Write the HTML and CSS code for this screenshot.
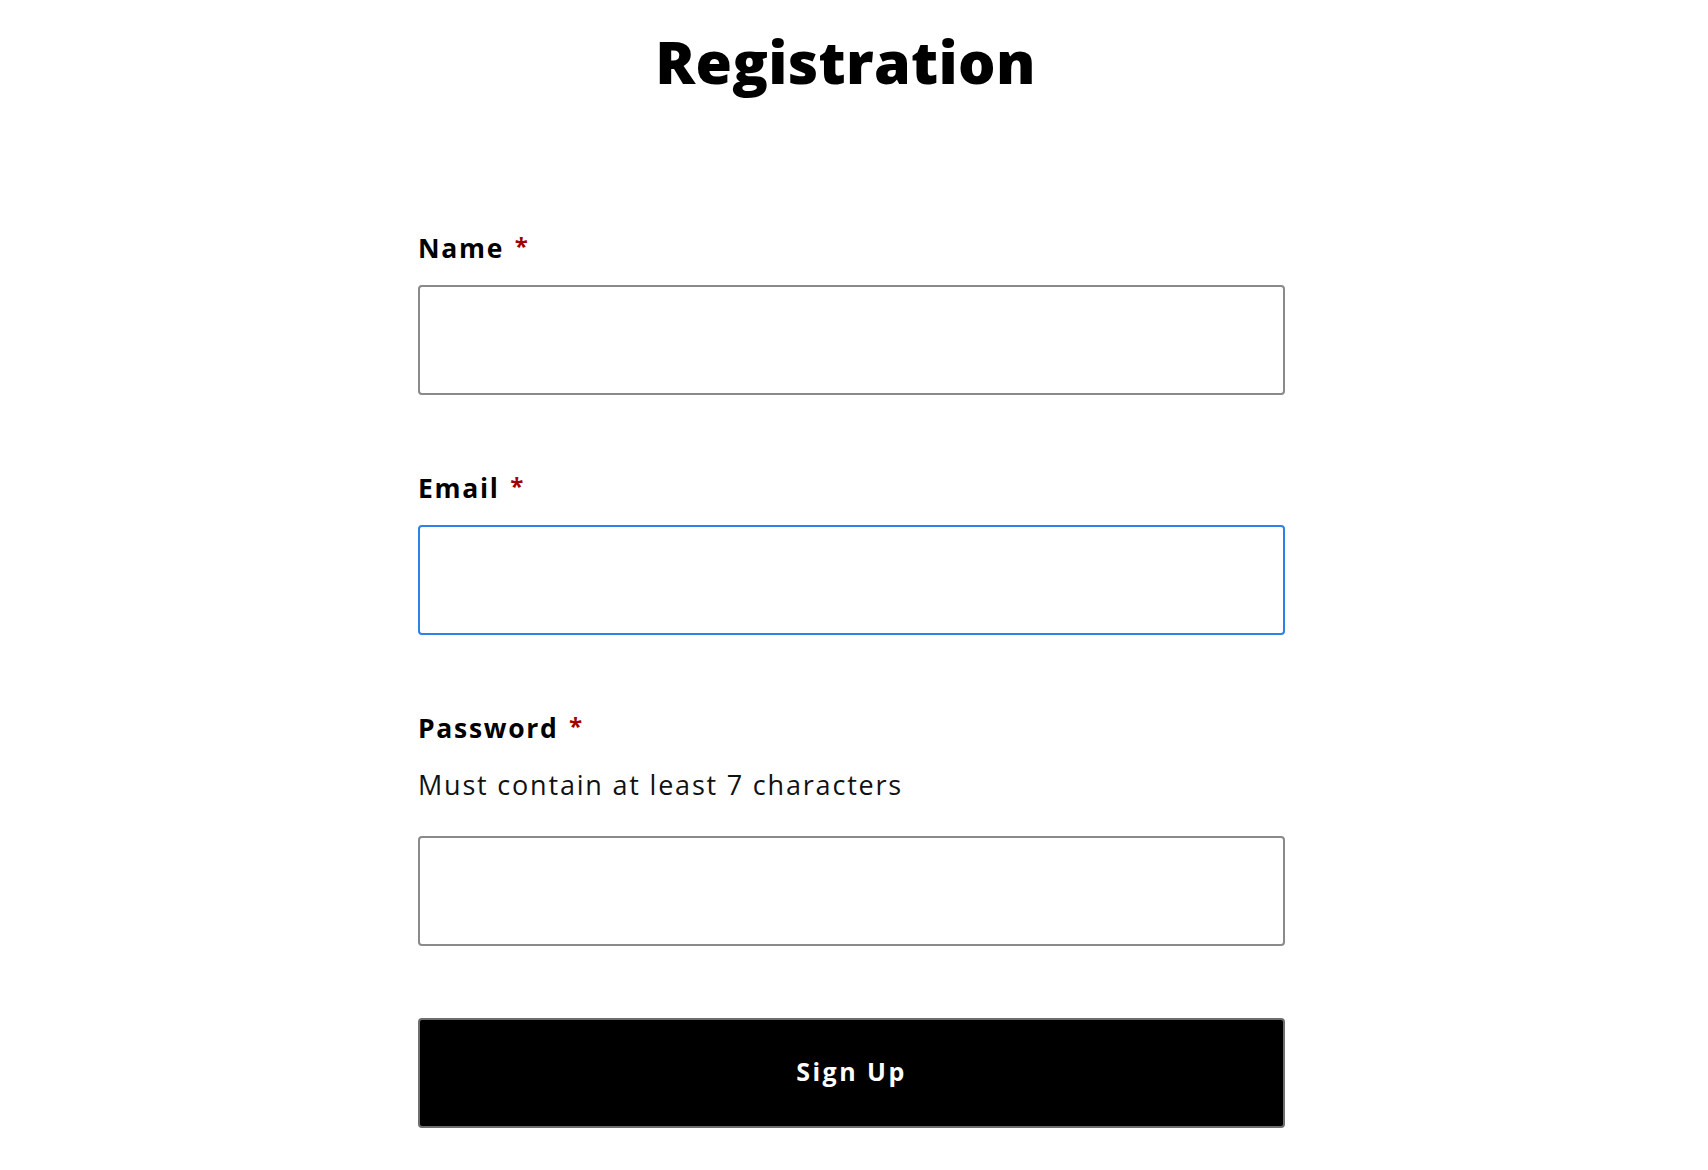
FILE: index.html
```html
<!DOCTYPE html>
<html lang="en">
<head>
<meta charset="utf-8">
<title>Registration</title>
<link rel="stylesheet" href="styles.css">
</head>
<body>
<main class="page">
  <h1 class="title">Registration</h1>
  <form class="form">
    <div class="field">
      <label class="label" for="name">Name <span class="req">*</span></label>
      <input class="input" id="name" type="text">
    </div>
    <div class="field">
      <label class="label" for="email">Email <span class="req">*</span></label>
      <input class="input input-focus" id="email" type="email">
    </div>
    <div class="field">
      <label class="label" for="password">Password <span class="req">*</span></label>
      <p class="hint">Must contain at least 7 characters</p>
      <input class="input" id="password" type="password">
    </div>
    <button class="submit" type="button">Sign Up</button>
  </form>
</main>
</body>
</html>
```

FILE: styles.css
```css
html, body {
  margin: 0;
  padding: 0;
  background: #ffffff;
}

body {
  font-family: "Open Sans", "DejaVu Sans", sans-serif;
  color: #000000;
}

.page {
  width: 867px;
  margin-left: 418px;
  padding-top: 21px;
}

.title {
  margin: 0;
  padding-right: 12px;
  font-size: 59px;
  line-height: 80px;
  font-weight: 800;
  text-align: center;
  letter-spacing: 0.3px;
}

.form {
  display: flex;
  flex-direction: column;
  margin-top: 127px;
}

.field {
  display: flex;
  flex-direction: column;
  margin-bottom: 73.7px;
}

.field:last-of-type {
  margin-bottom: 72px;
}

.label {
  display: block;
  font-size: 26.5px;
  line-height: 36px;
  font-weight: 700;
  letter-spacing: 1.7px;
  margin-bottom: 18.5px;
}

.req {
  color: #a30000;
  font-size: 24px;
  letter-spacing: 0;
  vertical-align: 3px;
  margin-left: 2px;
}

.hint {
  margin: 2.5px 0 32.5px;
  font-size: 27px;
  line-height: 36px;
  font-weight: 400;
  letter-spacing: 1.8px;
  color: #111111;
}

.input {
  box-sizing: border-box;
  width: 100%;
  height: 110px;
  margin: 0;
  padding: 0 16px;
  border: 2px solid #8a8a8a;
  border-radius: 4px;
  background: #ffffff;
  font: inherit;
  font-size: 24px;
  outline: none;
}

.input-focus {
  border-color: #2f80e8;
}

.submit {
  box-sizing: border-box;
  width: 100%;
  height: 110px;
  margin: 0;
  padding: 0 0 4px;
  border: 2px solid #6e6e6e;
  border-radius: 4px;
  background: #000000;
  color: #ffffff;
  font-family: "Open Sans", "DejaVu Sans", sans-serif;
  font-size: 25px;
  font-weight: 700;
  letter-spacing: 2.5px;
  cursor: pointer;
}
```
